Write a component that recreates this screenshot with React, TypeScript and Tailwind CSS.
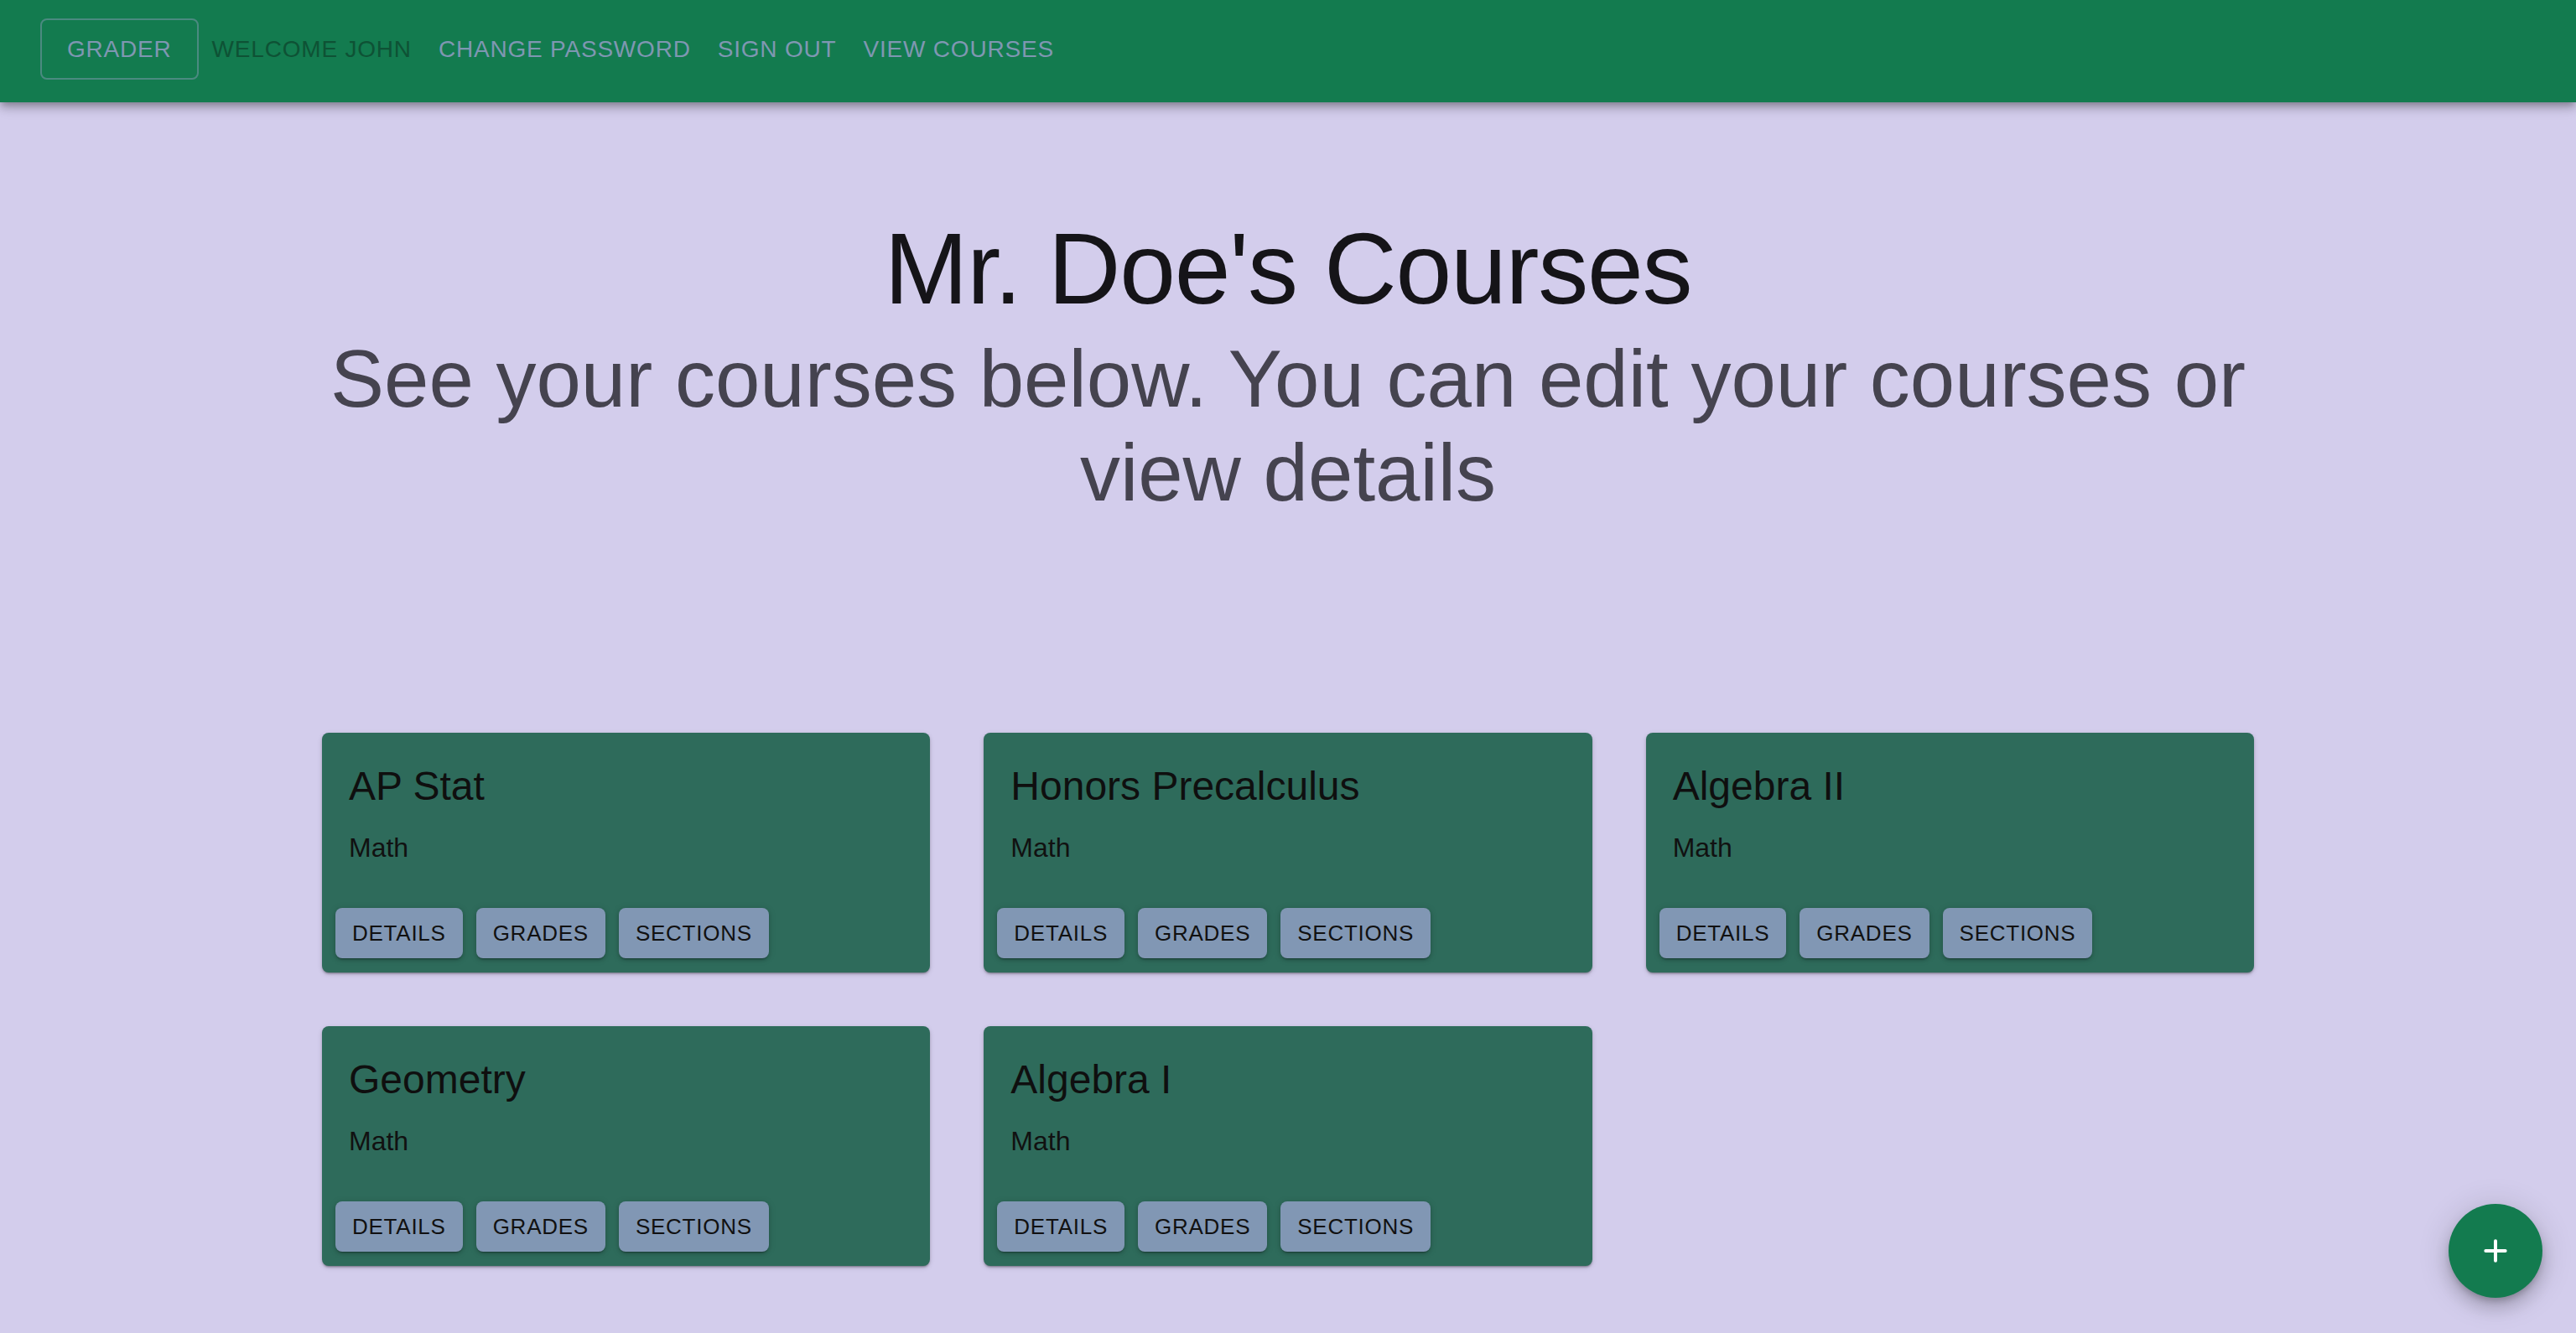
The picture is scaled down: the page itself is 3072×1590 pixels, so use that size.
import { Plus } from "lucide-react";

const courses = [
  { id: 1, name: "AP Stat", subject: "Math" },
  { id: 2, name: "Honors Precalculus", subject: "Math" },
  { id: 3, name: "Algebra II", subject: "Math" },
  { id: 4, name: "Geometry", subject: "Math" },
  { id: 5, name: "Algebra I", subject: "Math" },
];

const navLinks = ["CHANGE PASSWORD", "SIGN OUT", "VIEW COURSES"];

function NavBar() {
  return (
    <header className="relative z-10 h-[122px] bg-[#137b4f] shadow-[0_4px_8px_-2px_rgba(0,0,0,0.25),0_8px_10px_0_rgba(0,0,0,0.14),0_2px_20px_0_rgba(0,0,0,0.12)]">
      <div className="flex h-full items-center px-[48px] pb-[6px]">
        <button
          type="button"
          className="rounded-[8px] border-2 border-[#4b8a80] px-[30px] py-[10px] text-[28px] leading-[49px] tracking-[0.02857em] text-[#7f97b2]"
        >
          GRADER
        </button>
        <span className="px-[16px] py-[12px] text-[28px] leading-[49px] tracking-[0.02857em] text-[#0e5235]">
          WELCOME JOHN
        </span>
        {navLinks.map((label) => (
          <button
            key={label}
            type="button"
            className="px-[16px] py-[12px] text-[28px] leading-[49px] tracking-[0.02857em] text-[#7f97b2]"
          >
            {label}
          </button>
        ))}
      </div>
    </header>
  );
}

function CourseCard({ name, subject }: { name: string; subject: string }) {
  return (
    <div className="flex flex-col rounded-[8px] bg-[#2e6b5b] shadow-[0_2px_2px_-1px_rgba(0,0,0,0.25),0_2px_3px_0_rgba(0,0,0,0.14),0_2px_6px_0_rgba(0,0,0,0.12)]">
      <div className="px-[32px] pt-[32px] pb-[48px]">
        <h2 className="mb-[17px] text-[48px] leading-[64px] text-[#0f0f0f]">
          {name}
        </h2>
        <p className="text-[32px] leading-[48px] text-[#111111]">{subject}</p>
      </div>
      <div className="flex gap-[16px] px-[16px] pb-[17px]">
        {["DETAILS", "GRADES", "SECTIONS"].map((label) => (
          <button
            key={label}
            type="button"
            className="h-[60px] rounded-[8px] bg-[#8197b4] px-[20px] text-[26px] tracking-[0.02857em] text-[#111111] shadow-[0_3px_2px_-2px_rgba(0,0,0,0.3),0_2px_4px_0_rgba(0,0,0,0.16),0_1px_10px_0_rgba(0,0,0,0.12)]"
          >
            {label}
          </button>
        ))}
      </div>
    </div>
  );
}

export default function App() {
  return (
    <div className="min-h-screen bg-[#d3cdec] font-['Liberation_Sans',Arial,sans-serif]">
      <NavBar />

      <main className="mx-auto w-[2304px] pb-[80px]">
        <div className="pt-[126px] text-center">
          <h1 className="text-[120px] leading-[144px] tracking-[-0.01em] text-[#151418]">
            Mr. Doe's Courses
          </h1>
          <p className="mt-[4px] text-[96px] leading-[112px] text-[#45434f]">
            See your courses below. You can edit your courses or view details
          </p>
        </div>

        <div className="mt-[254px] grid grid-cols-3 gap-[64px]">
          {courses.map((c) => (
            <CourseCard key={c.id} name={c.name} subject={c.subject} />
          ))}
        </div>
      </main>

      <button
        type="button"
        className="fixed bottom-[42px] right-[40px] flex h-[112px] w-[112px] items-center justify-center rounded-full bg-[#137b4f] text-white shadow-[0_6px_10px_-3px_rgba(0,0,0,0.25),0_12px_20px_2px_rgba(0,0,0,0.14),0_4px_36px_4px_rgba(0,0,0,0.12)]"
      >
        <Plus size={40} strokeWidth={2.4} />
      </button>
    </div>
  );
}
